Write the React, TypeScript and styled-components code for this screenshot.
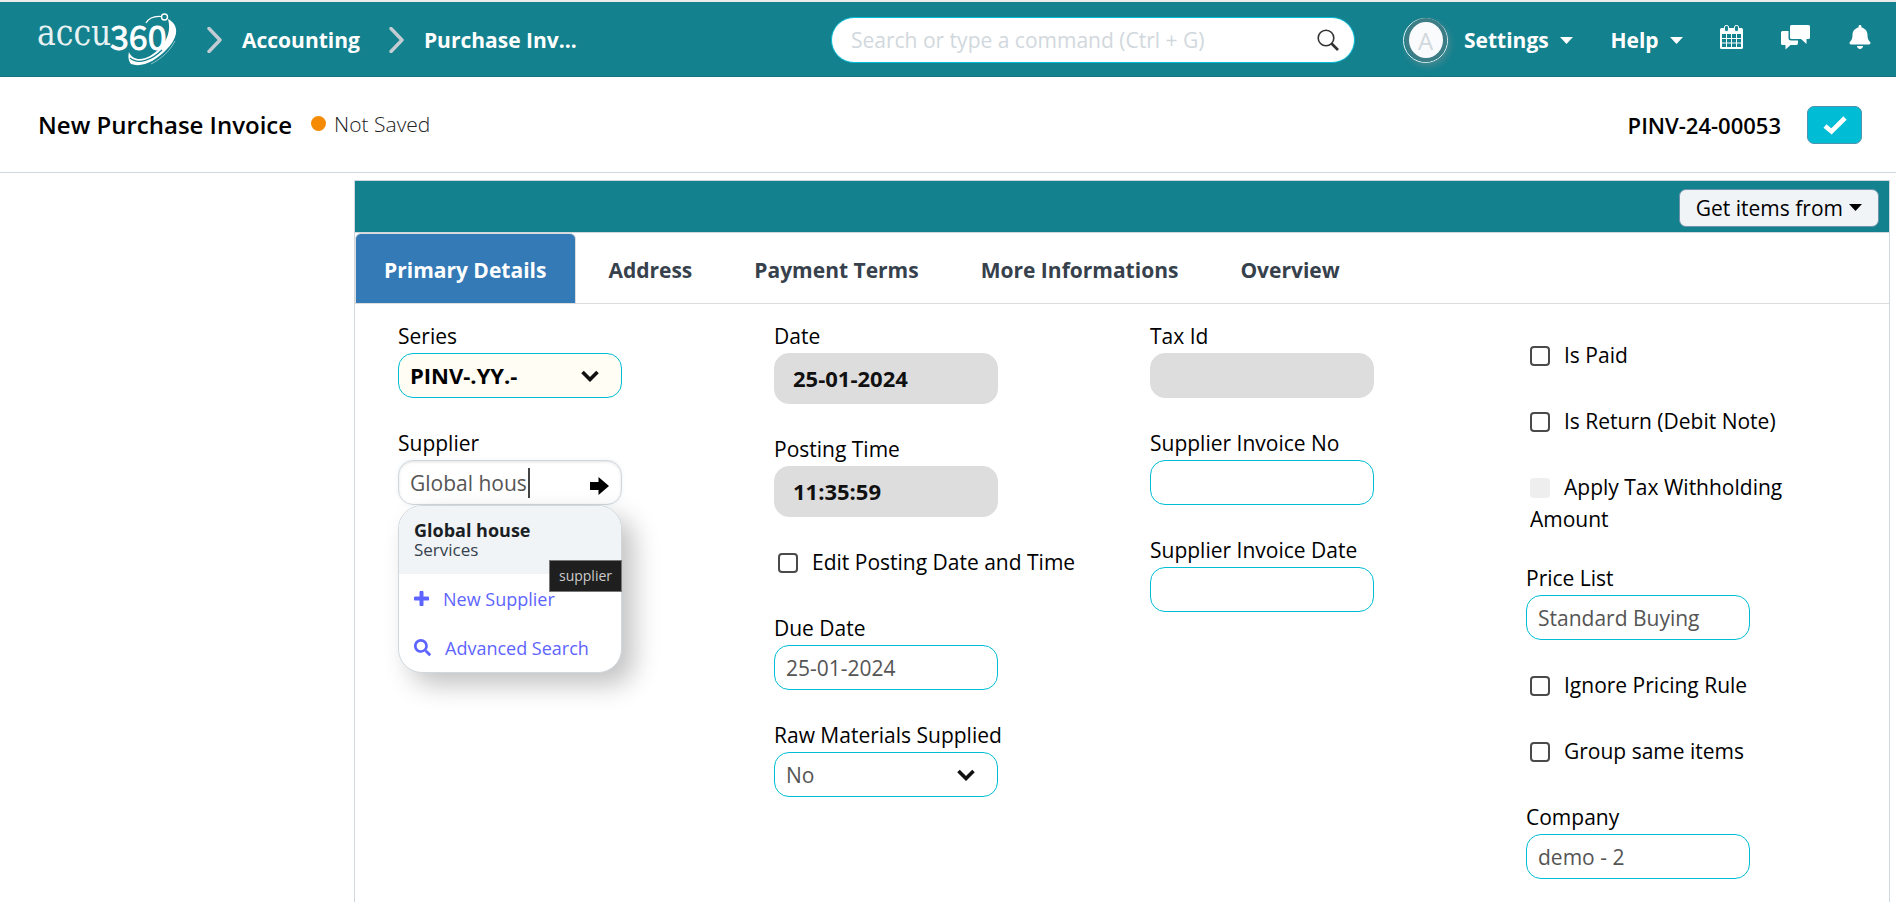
import React from "react";
import styled, { createGlobalStyle, css } from "styled-components";
import { FaBell, FaSearch } from "react-icons/fa";

const teal = "#14818e";
const cyan = "#00bcd4";
const line = "#d1d8dd";

const GlobalStyle = createGlobalStyle`
  *, *::before, *::after { box-sizing: border-box; }
  html, body { margin: 0; background: #fff; }
  body { overflow: hidden; }
  body, button, input, select {
    font-family: "Open Sans", "Noto Sans", sans-serif;
    font-size: 21px;
    color: #000;
  }
  a { color: inherit; text-decoration: none; }
  svg { display: block; flex: none; }
`;

const Page = styled.div`
  display: flex;
  flex-direction: column;
  height: 100vh;
  overflow: hidden;
`;

const Navbar = styled.header`
  flex: none;
  display: grid;
  grid-template-columns: minmax(0, 1fr) 524px 541px;
  align-items: center;
  height: 77px;
  padding-top: 2px;
  border-top: 2px solid #ebebeb;
  border-bottom: 1px solid #10707b;
  background: ${teal};
  color: #fff;
`;

const Breadcrumbs = styled.nav`
  display: flex;
  align-items: center;
  padding-left: 36px;
`;

const Crumb = styled.a`
  margin-left: 19px;
  font-weight: 700;
  white-space: nowrap;
`;

const Divider = styled.svg`
  margin-left: 29px;
`;

const SearchBox = styled.label`
  display: flex;
  align-items: center;
  height: 46px;
  padding: 0 14px 0 19px;
  border: 1px solid ${cyan};
  border-radius: 23px;
  background: #fff;
`;

const SearchInput = styled.input`
  flex: 1;
  min-width: 0;
  padding: 0;
  border: 0;
  outline: 0;
  background: none;
  &::placeholder { color: #d1d8dd; opacity: 1; }
`;

const NavTools = styled.div`
  display: flex;
  align-items: center;
  justify-content: space-between;
  padding: 0 24px 0 48px;
`;

const Account = styled.div`
  display: flex;
  align-items: center;
  gap: 16px;
`;

const Avatar = styled.span`
  display: grid;
  place-items: center;
  width: 45px;
  height: 45px;
  border: 1px solid #e6f2f3;
  border-radius: 50%;
  box-shadow: 2px 3px 6px rgba(150, 150, 150, 0.4);
`;

const Initial = styled.span`
  display: grid;
  place-items: center;
  width: 34px;
  height: 36px;
  border-radius: 50%;
  background: #fafbfc;
  box-shadow: 0 0 0 4px #3c7d86;
  color: #d1d8dd;
  font-size: 24px;
`;

const MenuButton = styled.button`
  display: flex;
  align-items: center;
  gap: 11px;
  padding: 0;
  border: 0;
  background: none;
  color: #fff;
  font-weight: 700;
`;

const IconButton = styled.button`
  padding: 0 0 6px;
  border: 0;
  background: none;
  color: #fff;
`;

const PageHead = styled.div`
  flex: none;
  display: flex;
  align-items: center;
  height: 96px;
  padding: 0 34px 0 38px;
  border-bottom: 1px solid ${line};
`;

const Title = styled.h1`
  margin: 0;
  font-size: 24px;
  font-weight: 600;
`;

const Status = styled.span`
  display: flex;
  align-items: center;
  gap: 8px;
  margin-left: 19px;
  padding-bottom: 2px;
  font-weight: 300;
  color: #222;
`;

const Dot = styled.span`
  width: 15px;
  height: 15px;
  border-radius: 50%;
  background: #f58b05;
`;

const DocName = styled.span`
  margin-left: auto;
  font-size: 22px;
  font-weight: 600;
`;

const SaveButton = styled.button`
  display: grid;
  place-items: center;
  width: 55px;
  height: 38px;
  margin-left: 26px;
  padding: 0;
  border: 1px solid #4f93ad;
  border-radius: 7px;
  background: ${cyan};
`;

const Panel = styled.main`
  flex: 1 0 auto;
  margin: 7px 6px 0 354px;
  border: 1px solid ${line};
  border-bottom: 0;
`;

const PanelBar = styled.div`
  display: flex;
  align-items: center;
  justify-content: flex-end;
  height: 52px;
  padding: 2px 10px 0;
  border-bottom: 1px solid ${line};
  background: ${teal};
`;

const GetItems = styled.button`
  display: flex;
  align-items: center;
  gap: 6px;
  height: 38px;
  padding: 0 16px;
  border: 1px solid #6f93ab;
  border-radius: 7px;
  background: #f0f4f7;
`;

const Tabs = styled.div`
  display: flex;
  gap: 3px;
  height: 71px;
  border-bottom: 1px solid #d9dde0;
`;

const Tab = styled.button<{ $active?: boolean }>`
  height: 71px;
  padding: 2px 29px 0 28px;
  border: 1px solid transparent;
  border-radius: 6px 6px 0 0;
  background: none;
  color: #36414c;
  font-weight: 700;
  white-space: nowrap;
  ${(p) => p.$active && css`
    border-color: #ddd;
    background: #337ab7;
    color: #fff;
  `}
`;

const Columns = styled.div`
  display: grid;
  grid-template-columns: repeat(4, minmax(0, 1fr));
  padding: 17px 15px 0;
`;

const Column = styled.div<{ $drop?: boolean }>`
  padding: ${(p) => (p.$drop ? "19px" : "0")} 28px 0;
`;

const Field = styled.div`
  position: relative;
  width: 224px;
  margin-bottom: 30px;
`;

const Label = styled.label`
  display: block;
  padding-bottom: 2px;
  line-height: 30px;
  white-space: nowrap;
`;

const boxStyle = css`
  display: block;
  width: 100%;
  height: 45px;
  padding: 0 11px;
  border: 1px solid ${cyan};
  border-radius: 15px;
  outline: 0;
  background: #fff;
  color: #555;
`;

const TextInput = styled.input<{ $open?: boolean }>`
  ${boxStyle}
  ${(p) => p.$open && css`
    border-color: ${line};
    box-shadow: inset 0 1px 3px rgba(0, 0, 0, 0.12), 0 0 5px rgba(200, 215, 225, 0.3);
  `}
`;

const ReadOnlyInput = styled.input<{ $tall?: boolean }>`
  ${boxStyle}
  height: ${(p) => (p.$tall ? 51 : 45)}px;
  padding: 0 18px 2px;
  border-color: #ddd;
  background: #ddd;
  color: #111;
  font-size: 22px;
  font-weight: 700;
`;

const Select = styled.select<{ $required?: boolean }>`
  ${boxStyle}
  appearance: none;
  ${(p) => p.$required && css`
    padding-bottom: 2px;
    background: #fffdf4;
    color: #000;
    font-size: 22px;
    font-weight: 700;
  `}
`;

const Control = styled.div`
  position: relative;
`;

const ControlIcon = styled.span`
  position: absolute;
  right: 23px;
  top: 17px;
  pointer-events: none;
`;

const LinkIcon = styled.span`
  position: absolute;
  right: 13px;
  top: 17px;
`;

const TextCursor = styled.span`
  position: absolute;
  left: 130px;
  top: 8px;
  width: 2px;
  height: 30px;
  background: #444;
`;

const CheckField = styled.div`
  min-height: 39px;
  margin: -1px 0 28px;
  padding-left: 4px;
  line-height: 32px;
`;

const CheckBox = styled.input`
  appearance: none;
  width: 20px;
  height: 20px;
  margin: 0 14px 0 0;
  border: 2px solid #4a4a4a;
  border-radius: 4px;
  background: #fff;
  vertical-align: -3px;
  &:disabled { border-color: #eee; background: #eee; }
`;

const Suggestions = styled.ul`
  position: absolute;
  z-index: 2;
  top: 77px;
  left: 0;
  width: 224px;
  margin: 0;
  padding: 0;
  overflow: hidden;
  border: 1px solid ${line};
  border-radius: 24px;
  background: #fff;
  box-shadow: 12px 12px 26px rgba(0, 0, 0, 0.24);
  list-style: none;
  font-size: 18px;
`;

const Match = styled.li`
  height: 68px;
  padding: 14px 15px;
  background: #f0f4f7;
  color: #1b1f24;
  line-height: 20px;
`;

const MatchName = styled.strong`
  display: block;
`;

const MatchGroup = styled.span`
  display: block;
  color: #36414c;
  font-size: 17px;
`;

const Action = styled.li`
  display: flex;
  align-items: center;
  height: 49px;
  padding-left: 15px;
  color: #5e64ff;
`;

const ActionLink = styled.a`
  display: flex;
  align-items: center;
  gap: 14px;
`;

const Tooltip = styled.div`
  position: absolute;
  z-index: 3;
  top: 132px;
  right: 0;
  height: 32px;
  padding: 0 9px;
  border: 1px solid #777;
  background: #1f1f1f;
  color: #ccc;
  font-size: 14px;
  line-height: 29px;
`;

const Caret = () => (
  <svg width="13" height="7" viewBox="0 0 13 7" aria-hidden="true">
    <path d="M0 0H13L6.5 7Z" fill="currentColor" />
  </svg>
);

const Chevron = () => (
  <svg width="18" height="12" viewBox="0 0 18 12" aria-hidden="true">
    <path d="M1.5 2L9 9.5L16.5 2" fill="none" stroke="#111" strokeWidth="3.6" />
  </svg>
);

const CrumbChevron = () => (
  <Divider width="16" height="26" viewBox="0 0 16 26" aria-hidden="true">
    <path d="M2 1.5L13 13L2 24.5" fill="none" stroke="#c3ccd3" strokeWidth="3.4" strokeLinejoin="round" strokeLinecap="round" />
  </Divider>
);

const Logo = () => (
  <svg width="142" height="58" viewBox="36 10 142 58" role="img" aria-label="accu360">
    <g fill="#fff">
      <text x="37" y="44" fontSize="35" fontFamily='"DejaVu Serif Condensed", "DejaVu Serif", serif' opacity="0.9">accu</text>
      <text x="110" y="49" fontSize="34" fontFamily='"Noto Sans CJK JP", sans-serif' stroke="#fff" strokeWidth="0.8">360</text>
      <path d="M168 18C180 24 178 37 167 48C156 60 142 67 131 63C128 59 128 55 129 51C132 59 141 60 150 55C165 46 172 32 168 18Z" />
    </g>
    <path d="M130 57C138 64 152 59 162 49" fill="none" stroke={teal} strokeWidth="1.2" />
    <path d="M146 22C149 17 155 15 161 15.5" fill="none" stroke="#fff" strokeWidth="1.2" />
    <circle cx="164.5" cy="16" r="3" fill="none" stroke="#fff" strokeWidth="1.4" />
    <path d="M175 40C170 50 161 58 151 63" fill="none" stroke="#fff" strokeWidth="1" opacity="0.5" />
  </svg>
);

const SearchIcon = () => (
  <svg width="24" height="24" viewBox="0 0 24 24" fill="none" stroke="#333" aria-hidden="true">
    <circle cx="10" cy="10" r="7.8" strokeWidth="1.6" />
    <path d="M15.500 15.500L22 22" strokeWidth="2.600" />
  </svg>
);

const PlusIcon = () => (
  <svg width="15" height="15" viewBox="0 0 15 15" aria-hidden="true">
    <path d="M7.500 1.500V13.500M1.500 7.500H13.500" stroke="currentColor" strokeWidth="4" strokeLinecap="round" />
  </svg>
);

const CalendarIcon = () => (
  <svg width="23" height="24" viewBox="0 0 23 24" aria-hidden="true">
    <rect y="3" width="23" height="21" rx="1.6" fill="currentColor" />
    <path fill={teal} d="M2 9h4v4H2zM7 9h4v4H7zM12 9h4v4h-4zM17 9h4v4h-4zM2 14h4v3.5H2zM7 14h4v3.5H7zM12 14h4v3.5h-4zM17 14h4v3.5h-4zM2 18.500h4v3.500H2zM7 18.500h4v3.500H7zM12 18.500h4v3.500h-4zM17 18.500h4v3.500h-4z" />
    <rect x="4.500" y="0.500" width="4" height="6" rx="1.600" fill={teal} stroke="currentColor" />
    <rect x="14.500" y="0.500" width="4" height="6" rx="1.600" fill={teal} stroke="currentColor" />
  </svg>
);

const CommentsIcon = () => (
  <svg width="29" height="25" viewBox="0 0 29 25" fill="currentColor" aria-hidden="true">
    <path d="M1.500 6H7.500V13Q7.500 15.500 10 15.500H17V18Q17 20 15.500 20H9.500L4.500 24.500V20H1.500Q0 20 0 18.500V7.500Q0 6 1.500 6Z" />
    <path d="M10.500 0H27.500Q29 0 29 1.500V12.500Q29 14 27.500 14H25.500V19L20 14H10.500Q9 14 9 12.500V1.500Q9 0 10.500 0Z" />
  </svg>
);

const CheckIcon = () => (
  <svg width="24" height="20" viewBox="0 0 24 20" aria-hidden="true">
    <path d="M2 11L8.500 16.500L22 3" fill="none" stroke="#fff" strokeWidth="4.600" />
  </svg>
);

const ArrowIcon = () => (
  <svg width="19" height="18" viewBox="0 0 19 18" aria-hidden="true">
    <path d="M0 5H8.500V0L19 9L8.500 18V13H0Z" fill="#000" />
  </svg>
);

function InputField({ id, label, value = "" }: { id: string; label: string; value?: string }) {
  return (
    <Field>
      <Label htmlFor={id}>{label}</Label>
      <TextInput id={id} defaultValue={value} />
    </Field>
  );
}

function ReadOnlyField({ id, label, value = "" }: { id: string; label: string; value?: string }) {
  return (
    <Field>
      <Label htmlFor={id}>{label}</Label>
      <ReadOnlyInput id={id} value={value} readOnly $tall={value !== ""} />
    </Field>
  );
}

function SelectField({ id, label, value, required }: { id: string; label: string; value: string; required?: boolean }) {
  return (
    <Field>
      <Label htmlFor={id}>{label}</Label>
      <Control>
        <Select id={id} $required={required}>
          <option>{value}</option>
        </Select>
        <ControlIcon><Chevron /></ControlIcon>
      </Control>
    </Field>
  );
}

function Check({ id, label, disabled }: { id: string; label: string; disabled?: boolean }) {
  return (
    <CheckField>
      <CheckBox type="checkbox" id={id} disabled={disabled} />
      <label htmlFor={id}>{label}</label>
    </CheckField>
  );
}

function SupplierField() {
  return (
    <Field>
      <Label htmlFor="supplier">Supplier</Label>
      <Control>
        <TextInput id="supplier" defaultValue="Global hous" $open />
        <TextCursor />
        <LinkIcon><ArrowIcon /></LinkIcon>
      </Control>
      <Suggestions>
        <Match>
          <MatchName>Global house</MatchName>
          <MatchGroup>Services</MatchGroup>
        </Match>
        <Action><ActionLink href="#new"><PlusIcon />New Supplier</ActionLink></Action>
        <Action><ActionLink href="#search"><FaSearch size={17} />Advanced Search</ActionLink></Action>
      </Suggestions>
      <Tooltip role="tooltip">supplier</Tooltip>
    </Field>
  );
}

const tabs = ["Primary Details", "Address", "Payment Terms", "More Informations", "Overview"];

export default function App() {
  return (
    <Page>
      <GlobalStyle />
      <Navbar>
        <Breadcrumbs>
          <a href="#home"><Logo /></a>
          <CrumbChevron />
          <Crumb href="#accounting">Accounting</Crumb>
          <CrumbChevron />
          <Crumb href="#purchase-invoice">Purchase Inv...</Crumb>
        </Breadcrumbs>
        <SearchBox>
          <SearchInput aria-label="Search" placeholder="Search or type a command (Ctrl + G)" />
          <SearchIcon />
        </SearchBox>
        <NavTools>
          <Account>
            <Avatar><Initial>A</Initial></Avatar>
            <MenuButton>Settings <Caret /></MenuButton>
          </Account>
          <MenuButton>Help <Caret /></MenuButton>
          <IconButton aria-label="Calendar"><CalendarIcon /></IconButton>
          <IconButton aria-label="Chat"><CommentsIcon /></IconButton>
          <IconButton aria-label="Notifications"><FaBell size={24} /></IconButton>
        </NavTools>
      </Navbar>

      <PageHead>
        <Title>New Purchase Invoice</Title>
        <Status><Dot />Not Saved</Status>
        <DocName>PINV-24-00053</DocName>
        <SaveButton aria-label="Save"><CheckIcon /></SaveButton>
      </PageHead>

      <Panel>
        <PanelBar>
          <GetItems>Get items from <Caret /></GetItems>
        </PanelBar>
        <Tabs role="tablist">
          {tabs.map((name, i) => (
            <Tab key={name} role="tab" aria-selected={i === 0} $active={i === 0}>{name}</Tab>
          ))}
        </Tabs>
        <Columns>
          <Column>
            <SelectField id="series" label="Series" value="PINV-.YY.-" required />
            <SupplierField />
          </Column>
          <Column>
            <ReadOnlyField id="date" label="Date" value="25-01-2024" />
            <ReadOnlyField id="posting-time" label="Posting Time" value="11:35:59" />
            <Check id="edit-posting" label="Edit Posting Date and Time" />
            <InputField id="due-date" label="Due Date" value="25-01-2024" />
            <SelectField id="raw-materials" label="Raw Materials Supplied" value="No" />
          </Column>
          <Column>
            <ReadOnlyField id="tax-id" label="Tax Id" />
            <InputField id="invoice-no" label="Supplier Invoice No" />
            <InputField id="invoice-date" label="Supplier Invoice Date" />
          </Column>
          <Column $drop>
            <Check id="is-paid" label="Is Paid" />
            <Check id="is-return" label="Is Return (Debit Note)" />
            <Check id="withholding" label="Apply Tax Withholding Amount" disabled />
            <InputField id="price-list" label="Price List" value="Standard Buying" />
            <Check id="ignore-pricing" label="Ignore Pricing Rule" />
            <Check id="group-items" label="Group same items" />
            <InputField id="company" label="Company" value="demo - 2" />
          </Column>
        </Columns>
      </Panel>
    </Page>
  );
}
